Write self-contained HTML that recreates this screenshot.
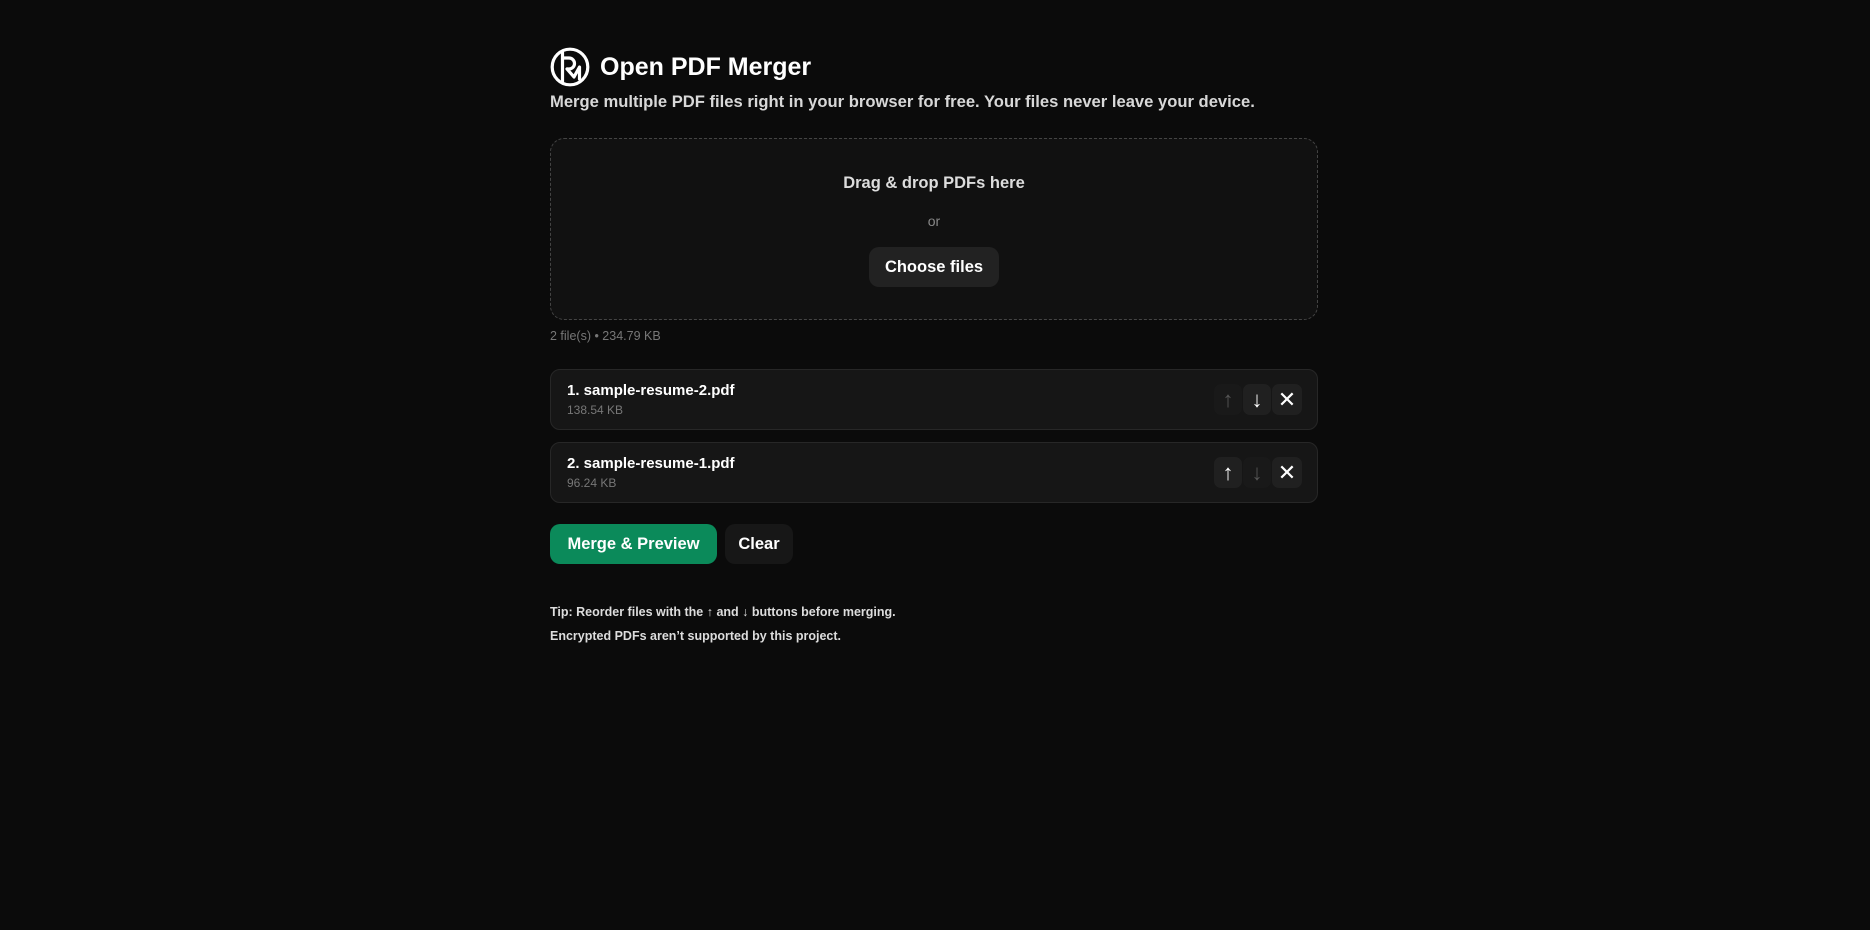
<!DOCTYPE html>
<html><head><meta charset="utf-8"><style>
*{box-sizing:border-box;margin:0;padding:0}
body{width:1870px;height:930px;background:#0b0b0b;color:#fff;font-family:"Liberation Sans",sans-serif;position:relative;overflow:hidden}
.a{position:absolute}
.h{left:550px;top:47px;display:flex;align-items:center;gap:10px}
.h span{font-size:25px;font-weight:bold}
.sub{left:550px;top:92px;font-size:16.6px;font-weight:bold;color:#d8d8d8}
.dz{left:550px;top:138px;width:768px;height:182px;background:#111;border:1.5px dashed #444;border-radius:14px}
.c{width:100%;text-align:center}
.btn{border-radius:10px;display:flex;align-items:center;justify-content:center;font-weight:bold}
.row{left:550px;width:768px;height:61px;background:#161616;border:1px solid #272727;border-radius:10px}
.rb{position:absolute;top:14px;width:28px;height:31px;border-radius:7px;background:#202020;display:flex;align-items:center;justify-content:center;font-size:22px}
.nm{position:absolute;left:16px;top:12px;font-size:15px;font-weight:bold}
.sz{position:absolute;left:16px;top:33px;font-size:12px;color:#777}
.t{left:550px;font-size:12.5px;color:#ddd;font-weight:bold}
</style></head><body>
<div class="a h"><svg width="40" height="40" viewBox="0 0 40 40"><circle cx="20" cy="20" r="17.8" fill="none" stroke="#fff" stroke-width="3.2"/><path d="M12.5 5.5V36M12.5 11h6.5a5.5 5.5 0 0 1 0 11h-1M17 22l7 8 5.5-10v12" fill="none" stroke="#fff" stroke-width="3.2" stroke-linejoin="round" stroke-linecap="round"/></svg><span>Open PDF Merger</span></div>
<div class="a sub">Merge multiple PDF files right in your browser for free. Your files never leave your device.</div>
<div class="a dz">
<div class="a c" style="top:35px;font-size:16.5px;font-weight:bold;color:#ddd">Drag &amp; drop PDFs here</div>
<div class="a c" style="top:74px;font-size:14px;color:#888">or</div>
<div class="a btn" style="left:318px;top:108px;width:130px;height:40px;background:#222;font-size:16.5px">Choose files</div>
</div>
<div class="a" style="left:550px;top:329px;font-size:12.5px;color:#777">2 file(s) • 234.79 KB</div>
<div class="a row" style="top:369px"><div class="nm">1. sample-resume-2.pdf</div><div class="sz">138.54 KB</div>
<div class="rb" style="left:663px;color:#555;background:#191919">↑</div><div class="rb" style="left:692px">↓</div><div class="rb" style="left:721px;width:30px">✕</div></div>
<div class="a row" style="top:442px"><div class="nm">2. sample-resume-1.pdf</div><div class="sz">96.24 KB</div>
<div class="rb" style="left:663px">↑</div><div class="rb" style="left:692px;color:#555;background:#191919">↓</div><div class="rb" style="left:721px;width:30px">✕</div></div>
<div class="a btn" style="left:550px;top:524px;width:167px;height:40px;background:#0b8a5a;font-size:16.5px">Merge &amp; Preview</div>
<div class="a btn" style="left:725px;top:524px;width:68px;height:40px;background:#171717;font-size:16.5px">Clear</div>
<div class="a t" style="top:605px">Tip: Reorder files with the ↑ and ↓ buttons before merging.</div>
<div class="a t" style="top:629px">Encrypted PDFs aren’t supported by this project.</div>
</body></html>
